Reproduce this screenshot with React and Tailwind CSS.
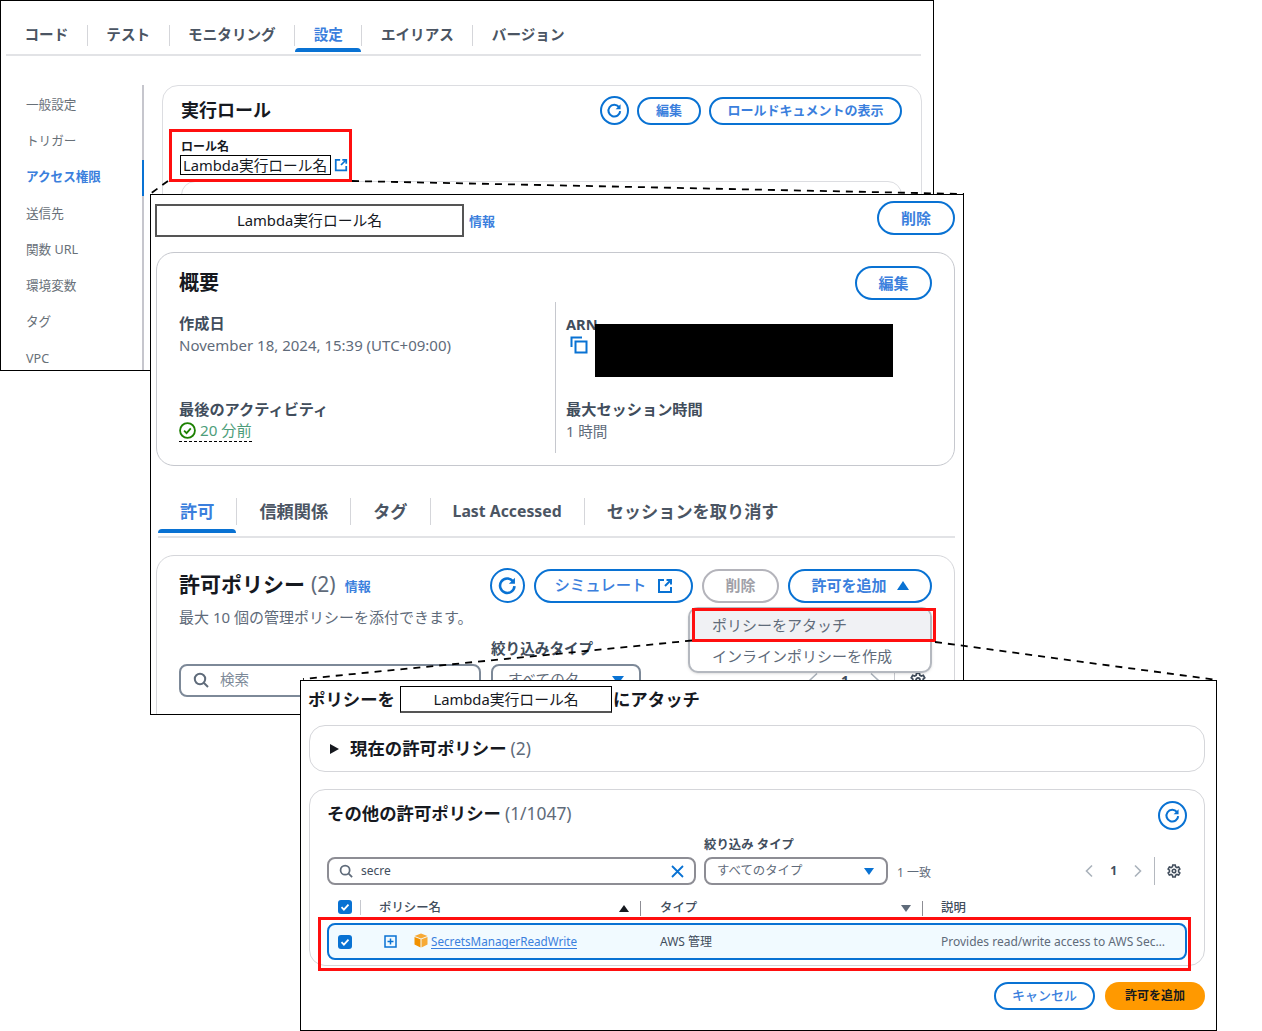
import React from "react";

const BLUE = "#0972d3";

const RefreshIcon = ({ size = 18 }) => (
  <svg width={size} height={size} viewBox="0 0 18 18" fill="none">
    <path d="M13.6 5.2A6.2 6.2 0 1 0 15 9.6" stroke={BLUE} strokeWidth="2.2" />
    <path d="M15.4 2.4v5.2h-5.2z" fill={BLUE} />
  </svg>
);

const ExternalIcon = ({ size = 14 }) => (
  <svg width={size} height={size} viewBox="0 0 16 16" fill="none" stroke={BLUE} strokeWidth="2">
    <path d="M7 2H2v12h12V9" />
    <path d="M9.5 2H14v4.5" />
    <path d="M14 2L8 8" />
  </svg>
);

const SearchIcon = ({ size = 16 }) => (
  <svg width={size} height={size} viewBox="0 0 16 16" fill="none" stroke="#5f6b7a" strokeWidth="2">
    <circle cx="7" cy="7" r="5.2" />
    <path d="M11 11l4 4" />
  </svg>
);

const GearIcon = ({ size = 14 }) => (
  <svg width={size} height={size} viewBox="0 0 16 16" fill="none" stroke="#414d5c" strokeWidth="1.8">
    <path d="M6.6 1.2h2.8l.4 2 1.5.9 2-.7 1.4 2.4-1.5 1.3v1.8l1.5 1.3-1.4 2.4-2-.7-1.5.9-.4 2H6.6l-.4-2-1.5-.9-2 .7-1.4-2.4 1.5-1.3V7.1L1.3 5.8l1.4-2.4 2 .7 1.5-.9z" />
    <circle cx="8" cy="8" r="2" />
  </svg>
);

const CheckBox = () => (
  <span className="flex h-[14px] w-[14px] items-center justify-center rounded-[3px] bg-[#0972d3]">
    <svg width="10" height="10" viewBox="0 0 10 10" fill="none" stroke="white" strokeWidth="1.8">
      <path d="M1.5 5.2l2.4 2.4 4.6-5" />
    </svg>
  </span>
);

const Pill = ({ children, className = "" }) => (
  <button className={`flex items-center justify-center rounded-full border-2 border-[#0972d3] bg-white font-bold text-[#3b7fdd] ${className}`}>
    {children}
  </button>
);

const Tabs = ({ items, active, className, pad, textClass }) => (
  <div className={`flex border-b-2 border-[#e2e3e6] ${className}`}>
    {items.map((t, i) => (
      <div key={t} className={`relative flex items-center ${textClass} ${t === active ? "text-[#3b7fdd]" : "text-[#4b5563]"}`}>
        <span className={`${pad} ${t === "Last Accessed" ? "text-[15.8px]" : ""}`}>{t}</span>
        {i < items.length - 1 && <span className="h-[70%] w-px shrink-0 bg-[#d5d6da]" />}
        {t === active && <span className="absolute -bottom-[2px] left-0 right-px h-[4px] rounded-t-sm bg-[#0972d3]" />}
      </div>
    ))}
  </div>
);

const sideItems = ["一般設定", "トリガー", "アクセス権限", "送信先", "関数 URL", "環境変数", "タグ", "VPC"];

const FirstWindow = () => (
  <div className="absolute left-0 top-0 h-[371px] w-[934px] overflow-hidden border border-black bg-white">
    <Tabs
      items={["コード", "テスト", "モニタリング", "設定", "エイリアス", "バージョン"]}
      active="設定"
      className="ml-[5px] mt-[19px] h-[36px] w-[915px] pb-[4px]"
      pad="px-[18.5px]"
      textClass="text-[14.6px] font-bold"
    />
    <div className="ml-[25px] mt-[29px] flex">
      <div className="w-[118px] border-r-2 border-[#c6c6cd]">
        <div className="flex flex-col pt-[2px]">
          {sideItems.map((s) => (
            <div
              key={s}
              className={`relative flex h-[36.3px] items-center text-[12.6px] ${s === "アクセス権限" ? "font-bold text-[#3b7fdd]" : "text-[#687078]"}`}
            >
              {s}
              {s === "アクセス権限" && <span className="absolute -right-[2px] top-0 h-[36px] w-[2px] bg-[#0972d3]" />}
            </div>
          ))}
        </div>
      </div>
      <div className="ml-[18px] h-[300px] w-[760px] rounded-[16px] border border-[#dcdde1] pl-[18px] pr-[19px] pt-[10px]">
        <div className="flex items-center justify-between">
          <h2 className="text-[18px] font-bold text-[#16191f]">実行ロール</h2>
          <div className="flex items-center gap-[8px]">
            <Pill className="h-[29px] w-[29px]"><RefreshIcon size={17} /></Pill>
            <Pill className="h-[28px] w-[64px] text-[13px]">編集</Pill>
            <Pill className="h-[28px] w-[193px] text-[13px]">ロールドキュメントの表示</Pill>
          </div>
        </div>
        <div className="mt-[14px] text-[12px] font-bold leading-[16px] text-[#16191f]">ロール名</div>
        <div className="-ml-[1px] flex items-center gap-[3px]">
          <span className="w-[151px] border border-black pl-[2px] text-[14.7px] leading-[18px] text-[#16191f]">Lambda実行ロール名</span>
          <ExternalIcon />
        </div>
        <div className="mt-[6px] h-[40px] rounded-t-[14px] border border-[#dcdde1]" />
      </div>
    </div>
    <div className="absolute left-[168px] top-[128px] h-[53px] w-[183px] border-[3px] border-[#ff0f0f]" />
  </div>
);

const SecondWindow = () => (
  <div className="absolute left-[150px] top-[194px] h-[521px] w-[814px] overflow-hidden border border-black bg-white">
    <div className="flex h-[41px] items-start pl-[4px] pr-[8px] pt-[6px]">
      <div className="mt-[3px] flex h-[33px] w-[309px] items-center justify-center border-2 border-[#555] text-[14.8px] text-[#16191f]">Lambda実行ロール名</div>
      <span className="ml-[5px] mt-[11px] text-[13px] font-bold text-[#3b7fdd]">情報</span>
      <Pill className="ml-auto h-[34px] w-[78px] text-[15px]">削除</Pill>
    </div>
    <div className="ml-[5px] mt-[16px] h-[214px] w-[799px] rounded-[18px] border border-[#c6c8ce] pl-[22px] pr-[22px] pt-[13px]">
      <div className="flex items-center justify-between">
        <h2 className="text-[20px] font-bold text-[#16191f]">概要</h2>
        <Pill className="h-[34px] w-[77px] text-[15px]">編集</Pill>
      </div>
      <div className="mt-[2px] flex">
        <div className="h-[151px] w-[376px]">
          <div className="mt-[10px] text-[15.2px] font-bold leading-[22px] text-[#414d5c]">作成日</div>
          <div className="text-[15px] leading-[22px] text-[#5f6b7a]">November 18, 2024, 15:39 (UTC+09:00)</div>
          <div className="mt-[42px] text-[15.2px] font-bold leading-[22px] text-[#414d5c]">最後のアクティビティ</div>
          <div className="inline-flex items-center gap-[4px] border-b border-dashed border-black text-[15.2px] leading-[21px] text-[#4d9d7a]">
            <svg width="17" height="17" viewBox="0 0 16 16" fill="none" stroke="#1d8102" strokeWidth="1.7">
              <circle cx="8" cy="8" r="7" />
              <path d="M4.8 8.2l2.3 2.3 4-4.4" />
            </svg>
            20 分前
          </div>
        </div>
        <div className="h-[151px] border-l border-[#c6c8ce] pl-[10px]">
          <div className="mt-[12px] text-[14.6px] font-bold leading-[20px] text-[#414d5c]">ARN</div>
          <svg className="ml-[4px] mt-[2px]" width="18" height="18" viewBox="0 0 18 18" fill="none" stroke={BLUE} strokeWidth="2">
            <path d="M1.5 11V1.5H12" />
            <rect x="5.5" y="5.5" width="11" height="11" />
          </svg>
          <div className="mt-[44px] text-[15.2px] font-bold leading-[22px] text-[#414d5c]">最大セッション時間</div>
          <div className="text-[14.6px] leading-[22px] text-[#5f6b7a]">1 時間</div>
        </div>
      </div>
    </div>
    <Tabs
      items={["許可", "信頼関係", "タグ", "Last Accessed", "セッションを取り消す"]}
      active="許可"
      className="ml-[7px] mt-[26px] h-[46px] w-[797px] pb-[5px]"
      pad="px-[22px]"
      textClass="text-[17.2px] font-bold"
    />
    <div className="ml-[5px] mt-[17px] h-[200px] w-[799px] rounded-[18px] border border-[#d5d6da] px-[22px] pt-[12px]">
      <div className="flex items-center justify-between">
        <div className="flex -translate-y-[1px] items-center">
          <h2 className="text-[21px] font-bold text-[#16191f]">許可ポリシー</h2>
          <span className="ml-[6px] text-[21px] text-[#5f6b7a]">(2)</span>
          <span className="ml-[9px] mt-[5px] text-[13px] font-bold text-[#3b7fdd]">情報</span>
        </div>
        <div className="flex items-center gap-[9px]">
          <Pill className="h-[35px] w-[35px]"><RefreshIcon size={21} /></Pill>
          <Pill className="h-[34px] w-[159px] gap-[10px] text-[15.4px] font-medium">シミュレート <ExternalIcon size={16} /></Pill>
          <button className="h-[34px] w-[77px] rounded-full border-2 border-[#b4b4bb] text-[15px] font-bold text-[#a0a0a8]">削除</button>
          <Pill className="h-[34px] w-[144px] gap-[10px] text-[15px]">
            許可を追加
            <span className="h-0 w-0 border-x-[6.5px] border-b-[9px] border-x-transparent border-b-[#0972d3]" />
          </Pill>
        </div>
      </div>
      <p className="mt-[3px] text-[15px] leading-[22px] text-[#5f6b7a]">最大 10 個の管理ポリシーを添付できます。</p>
      <div className="mt-[10px] flex items-end">
        <div className="flex h-[33px] w-[302px] items-center gap-[11px] rounded-[8px] border-2 border-[#7d8998] pl-[12px] text-[14.6px] text-[#7d8998]">
          <SearchIcon />検索
        </div>
        <div className="ml-[10px]">
          <div className="mb-[4px] text-[14.6px] font-bold text-[#414d5c]">絞り込みタイプ</div>
          <div className="flex h-[33px] w-[150px] items-center justify-between rounded-[8px] border-2 border-[#7d8998] px-[15px] text-[14.6px] text-[#5f6b7a]">
            すべてのタ
            <span className="h-0 w-0 border-x-[6px] border-t-[8px] border-x-transparent border-t-[#0972d3]" />
          </div>
        </div>
        <div className="ml-[166px] flex h-[33px] items-center text-[14px] font-bold text-[#414d5c]">
          <svg width="12" height="17" viewBox="0 0 12 17" fill="none" stroke="#aab2bb" strokeWidth="1.6"><path d="M10 1.500L2.500 8.500 10 15.500" /></svg>
          <span className="ml-[22px] mr-[21px] w-[7px]">1</span>
          <svg width="12" height="17" viewBox="0 0 12 17" fill="none" stroke="#aab2bb" strokeWidth="1.6"><path d="M2 1.500L9.500 8.500 2 15.500" /></svg>
          <span className="ml-[13px] mr-[15px] h-[33px] w-px bg-[#c6c8ce]" />
          <GearIcon size={16} />
        </div>
      </div>
    </div>
    <div className="absolute left-[444px] top-[129px] h-[53px] w-[298px] bg-black" />
    <div className="absolute left-[537px] top-[412px] h-[66px] w-[244px] overflow-hidden rounded-[10px] border-2 border-[#b4b8bf] bg-white text-[15px] text-[#5f6b7a] shadow-sm">
      <div className="flex h-[32px] items-center bg-[#f0f1f4] pl-[22px]">ポリシーをアタッチ</div>
      <div className="flex h-[30px] items-center pl-[22px]">インラインポリシーを作成</div>
    </div>
    <div className="absolute left-[541px] top-[413px] h-[34px] w-[244px] border-[3px] border-[#ff0f0f]" />
  </div>
);

const columns = "grid grid-cols-[34px_18px_263px_281px_1fr] items-center";

const ThirdWindow = () => (
  <div className="absolute left-[300px] top-[680px] h-[351px] w-[917px] overflow-hidden border border-black bg-white">
    <div className="ml-[7px] mt-[5px] flex items-center text-[17.4px] font-bold text-[#16191f]">
      ポリシーを
      <span className="ml-[5px] mr-[1px] flex h-[27px] w-[212px] items-center justify-center border border-black border-b-2 border-b-[#555] text-[14.8px] font-normal">Lambda実行ロール名</span>
      にアタッチ
    </div>
    <div className="ml-[8px] mt-[12px] flex h-[47px] w-[896px] items-center rounded-[16px] border border-[#d5d6da] pl-[20px]">
      <span className="h-0 w-0 border-y-[5px] border-l-[9px] border-y-transparent border-l-[#16191f]" />
      <span className="ml-[11px] text-[17.4px] font-bold text-[#16191f]">現在の許可ポリシー</span>
      <span className="ml-[4px] text-[17.4px] text-[#5f6b7a]">(2)</span>
    </div>
    <div className="ml-[8px] mt-[17px] h-[177px] w-[896px] rounded-[16px] border border-[#d5d6da] px-[17px] pt-[11px]">
      <div className="flex items-center justify-between">
        <div className="flex -translate-y-[2px] items-center">
          <h2 className="text-[17.4px] font-bold text-[#16191f]">その他の許可ポリシー</h2>
          <span className="ml-[4px] text-[17.4px] text-[#5f6b7a]">(1/1047)</span>
        </div>
        <Pill className="h-[29px] w-[29px]"><RefreshIcon size={17} /></Pill>
      </div>
      <div className="mt-[7px] flex items-end">
        <div className="flex h-[28px] w-[369px] items-center rounded-[8px] border-2 border-[#8d8d94] pl-[10px] pr-[10px] text-[12px] text-[#414d5c]">
          <SearchIcon size={14} />
          <span className="ml-[8px]">secre</span>
          <svg className="ml-auto" width="13" height="13" viewBox="0 0 13 13" stroke={BLUE} strokeWidth="1.8"><path d="M1 1l11 11M12 1L1 12" /></svg>
        </div>
        <div className="ml-[8px]">
          <div className="mb-[4px] text-[12.4px] font-bold leading-[16px] text-[#414d5c]">絞り込み タイプ</div>
          <div className="flex h-[28px] w-[184px] items-center justify-between rounded-[8px] border-2 border-[#8d8d94] pl-[11px] pr-[12px] text-[12.4px] text-[#5f6b7a]">
            すべてのタイプ
            <span className="h-0 w-0 border-x-[5px] border-t-[7px] border-x-transparent border-t-[#0972d3]" />
          </div>
        </div>
        <span className="ml-[9px] pb-[3px] text-[12px] text-[#5f6b7a]">1 一致</span>
        <div className="ml-auto flex h-[28px] items-center pr-[6px] text-[12px] font-bold text-[#414d5c]">
          <svg width="10" height="14" viewBox="0 0 10 14" fill="none" stroke="#aab2bb" strokeWidth="1.6"><path d="M8 1.5L2.5 7 8 12.5" /></svg>
          <span className="mx-[16px]">1</span>
          <svg width="10" height="14" viewBox="0 0 10 14" fill="none" stroke="#aab2bb" strokeWidth="1.6"><path d="M2 1.5L7.5 7 2 12.5" /></svg>
          <span className="ml-[11px] mr-[12px] h-[28px] w-px bg-[#b4b8bf]" />
          <GearIcon />
        </div>
      </div>
      <div className={`${columns} mt-[14px] h-[18px] pl-[11px] text-[12.4px] font-medium text-[#414d5c]`}>
        <span className="flex -translate-y-[1px] items-center"><CheckBox /><span className="ml-[8px] h-[15px] w-px bg-[#c6c8ce]" /></span>
        <span />
        <span className="flex items-center justify-between pr-[12px]">
          <span className="-ml-[11px]">ポリシー名</span>
          <span className="flex items-center gap-[11px]">
            <span className="h-0 w-0 border-x-[5px] border-b-[7px] border-x-transparent border-b-[#16191f]" />
            <span className="h-[15px] w-px bg-[#8d8d94]" />
          </span>
        </span>
        <span className="flex items-center justify-between pl-[7px] pr-[11px]">
          タイプ
          <span className="flex items-center gap-[11px]">
            <span className="h-0 w-0 border-x-[5px] border-t-[7px] border-x-transparent border-t-[#5f6b7a]" />
            <span className="h-[15px] w-px bg-[#8d8d94]" />
          </span>
        </span>
        <span className="pl-[7px]">説明</span>
      </div>
      <div className={`${columns} mt-[6px] h-[37px] w-[860px] rounded-[8px] border-2 border-[#0972d3] bg-[#f1faff] pl-[9px] text-[12px] text-[#414d5c]`}>
        <CheckBox />
        <svg className="ml-[12px]" width="13" height="13" viewBox="0 0 13 13" fill="none" stroke={BLUE} strokeWidth="1.5">
          <rect x="1" y="1" width="11" height="11" />
          <path d="M6.5 3.5v6M3.5 6.5h6" />
        </svg>
        <span className="flex items-center pl-[24px]">
          <svg className="mb-[3px] mr-[3px]" width="14" height="15" viewBox="0 0 14 15">
            <path d="M7 .5l6.5 2.6L7 5.4.5 3.1z" fill="#f7a935" />
            <path d="M.5 4v7.6L6.5 14.500V6.200z" fill="#f29100" />
            <path d="M13.500 4v7.600L7.500 14.500V6.200z" fill="#f7a935" />
          </svg>
          <span className="border-b border-[#3b7fdd] text-[11.7px] leading-[14px] text-[#3b7fdd]">SecretsManagerReadWrite</span>
        </span>
        <span className="pl-[7px]">AWS 管理</span>
        <span className="pl-[7px] text-[#5f6b7a]">Provides read/write access to AWS Sec…</span>
      </div>
    </div>
    <div className="ml-[8px] mt-[16px] flex w-[896px] justify-end gap-[10px] text-[13px]">
      <Pill className="h-[28px] w-[101px] font-medium">キャンセル</Pill>
      <button className="h-[28px] w-[100px] rounded-full bg-[#ff9900] text-[12px] font-bold text-[#16191f]">許可を追加</button>
    </div>
    <div className="absolute left-[17px] top-[236px] h-[54px] w-[873px] border-[3px] border-[#ff0f0f]" />
  </div>
);

const DashedLines = ({ lines }) => (
  <svg className="pointer-events-none absolute left-0 top-0" width="1262" height="1031">
    {lines.map((l, i) => (
      <line key={i} x1={l[0]} y1={l[1]} x2={l[2]} y2={l[3]} stroke="black" strokeWidth="1.8" strokeDasharray="7 6" />
    ))}
  </svg>
);

export default function App() {
  return (
    <div className="relative h-[1031px] w-[1262px] overflow-hidden bg-white font-['Noto_Sans','Noto_Sans_CJK_JP',sans-serif]">
      <FirstWindow />
      <DashedLines lines={[[352, 181, 964, 194], [168, 181, 150, 194]]} />
      <SecondWindow />
      <DashedLines lines={[[692, 640.5, 303, 679], [935, 642, 1217, 680]]} />
      <ThirdWindow />
    </div>
  );
}
